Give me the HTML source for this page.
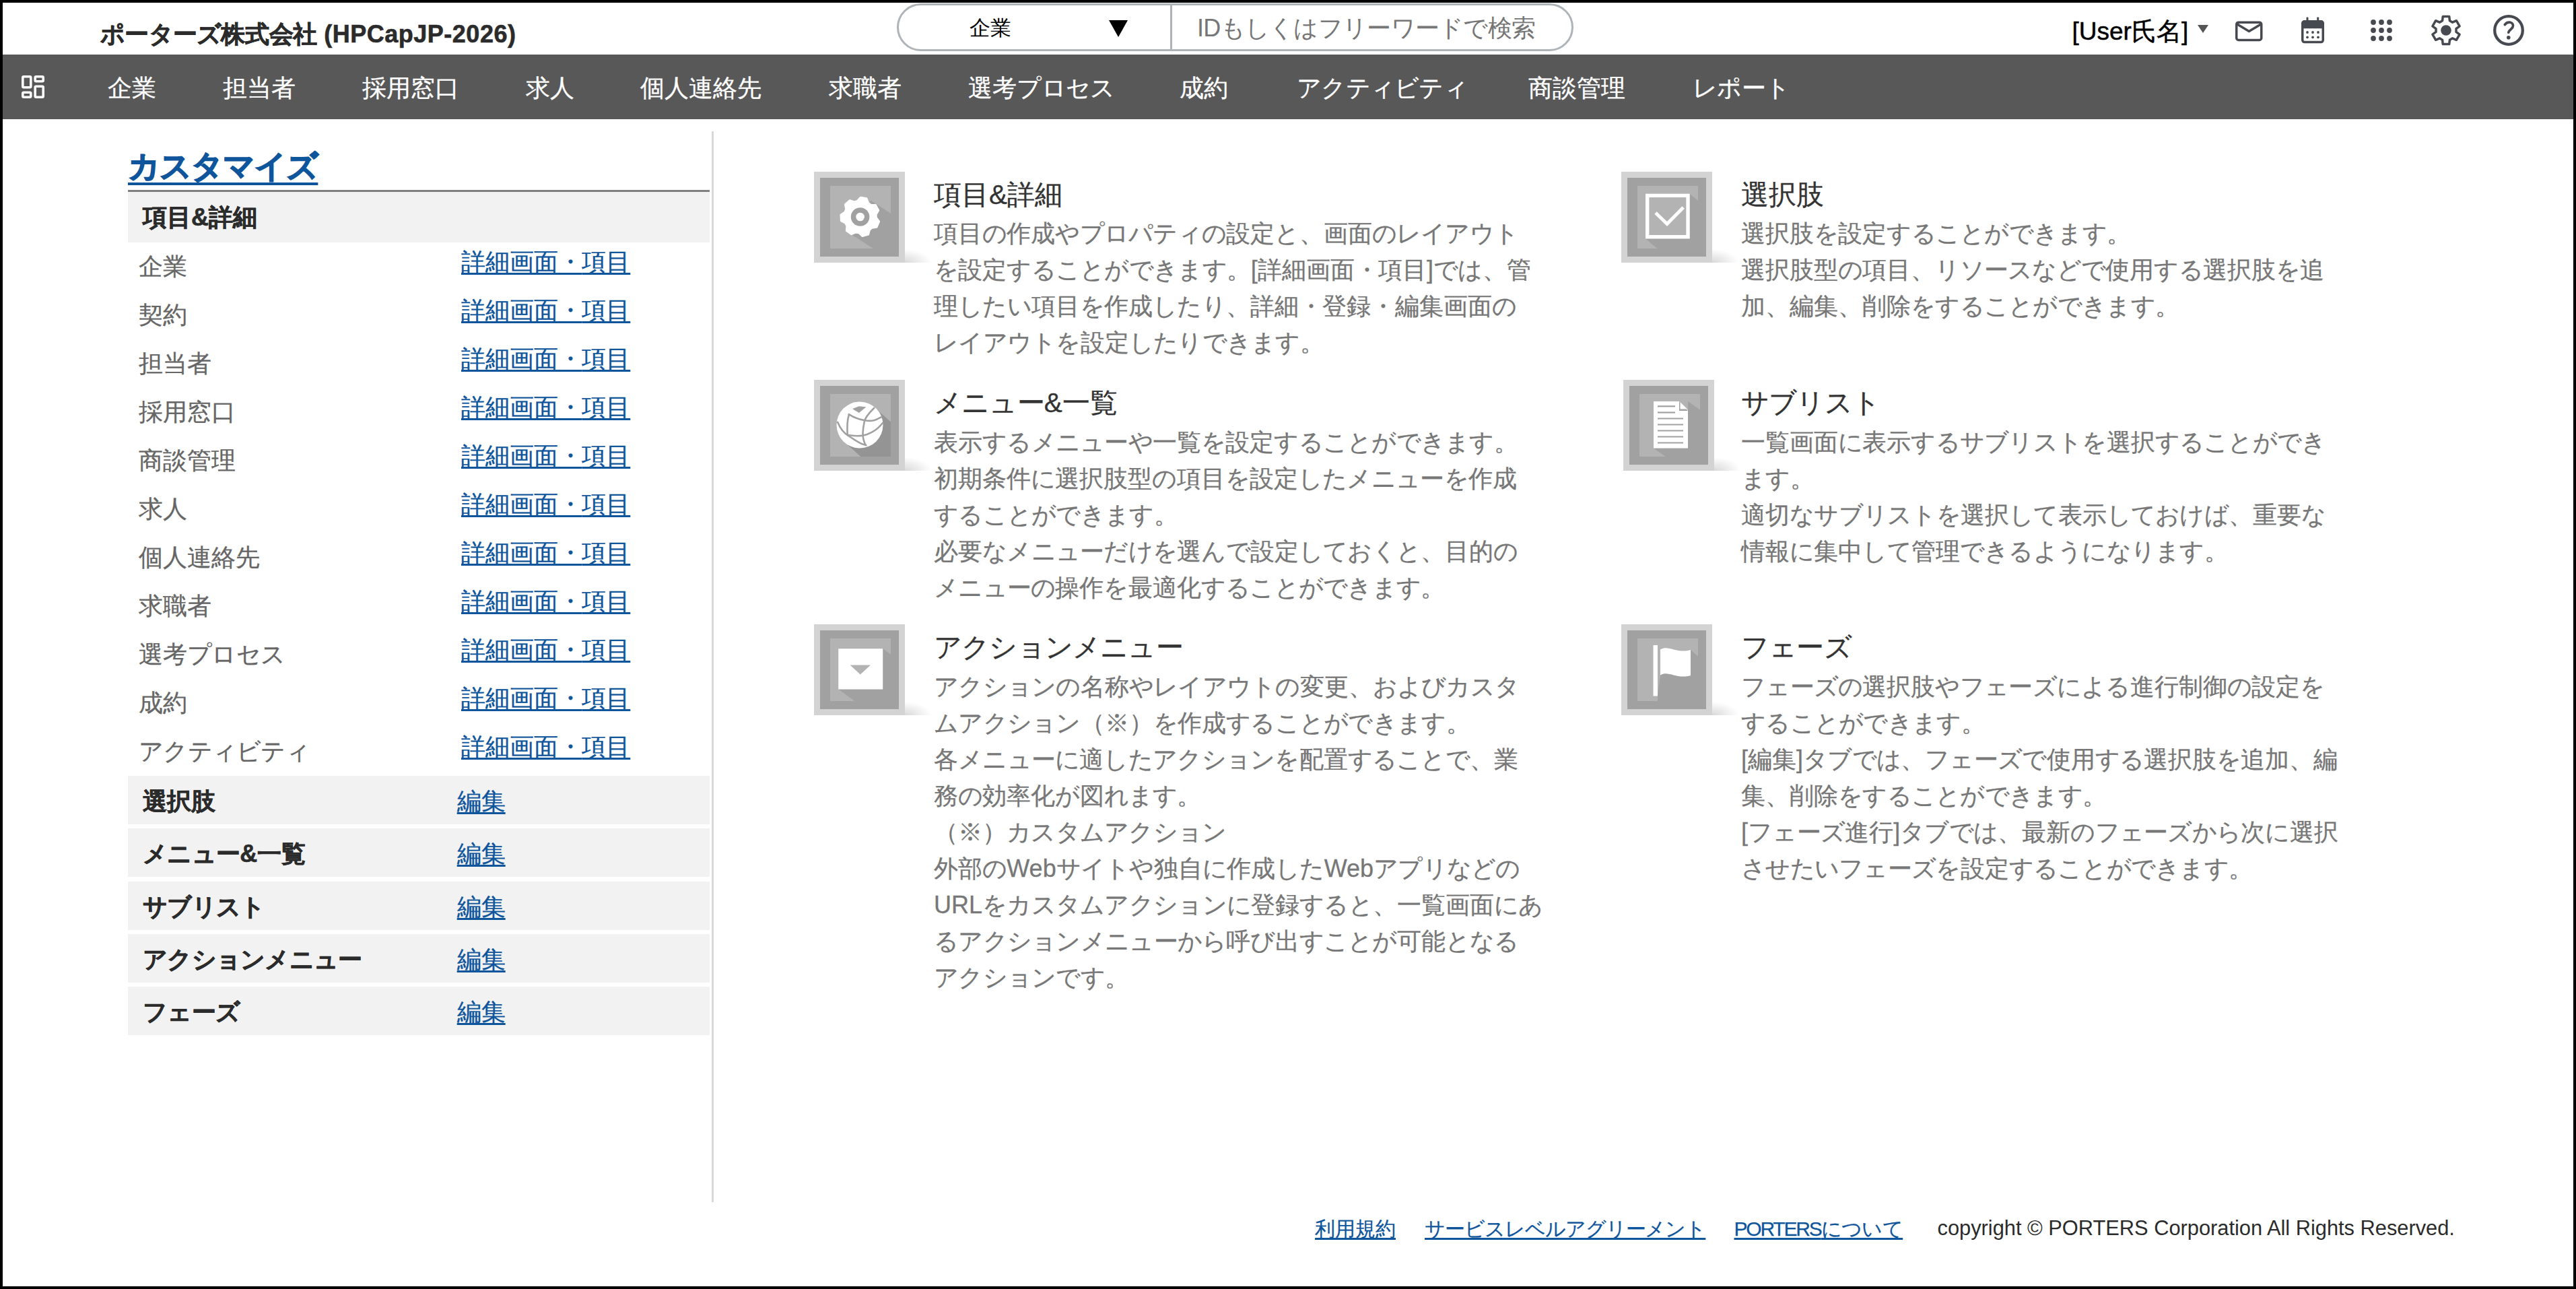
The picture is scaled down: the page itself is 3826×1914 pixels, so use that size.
<!DOCTYPE html>
<html lang="ja">
<head>
<meta charset="utf-8">
<style>
*{box-sizing:border-box;margin:0;padding:0}
html,body{width:3826px;height:1914px;overflow:hidden;background:#000}
body{font-family:"Liberation Sans",sans-serif;position:relative}
#page{position:absolute;left:4px;top:4px;width:3818px;height:1906px;background:#fff;overflow:hidden}
.a{position:absolute;white-space:nowrap}
#title{left:145px;top:25px;font-size:36px;font-weight:bold;color:#2b2b2b;line-height:44px;-webkit-text-stroke:0.6px #2b2b2b}
#search{left:1328px;top:0.5px;width:1005px;height:71px;border:3px solid #aeb4b8;border-radius:36px}
#sdiv{left:1733.5px;top:1px;width:3px;height:70px;background:#aeb4b8}
#skind{left:1436px;top:16.5px;font-size:30.5px;color:#000;line-height:40px}
#stri{left:1643px;top:26px;width:0;height:0;border-left:14.5px solid transparent;border-right:14.5px solid transparent;border-top:25px solid #000}
#sph{left:1774px;top:16px;font-size:36px;color:#767676;line-height:44px;letter-spacing:-0.7px}
#user{left:3073.5px;top:20.5px;font-size:37px;color:#000;line-height:44px;-webkit-text-stroke:0.5px #000}
#utri{left:3260px;top:33px;width:0;height:0;border-left:8px solid transparent;border-right:8px solid transparent;border-top:12px solid #555}
#nav{left:0;top:77px;width:3818px;height:96px;background:#585858}
.nv{top:1.5px;font-size:36px;color:#fff;line-height:96px;-webkit-text-stroke:0.3px #fff}
#cust{left:186px;top:214.5px;font-size:47px;font-weight:bold;color:#0f559c;line-height:56px;-webkit-text-stroke:1.4px #0f559c;text-decoration:underline;text-decoration-thickness:4px;text-underline-offset:8px}
#rule{left:186px;top:278px;width:864px;height:3px;background:#808080}
.sh{left:186px;width:864px;height:72px;background:#f2f2f2}
.sht{left:208px;font-size:36px;font-weight:bold;color:#2b2b2b;line-height:44px;-webkit-text-stroke:0.6px #2b2b2b}
.it{left:202px;font-size:36px;color:#666;line-height:44px;-webkit-text-stroke:0.3px #666}
.lk{color:#0f559c;font-size:36px;line-height:44px;text-decoration:underline;text-decoration-thickness:3px;text-underline-offset:4px;-webkit-text-stroke:0.3px #0f559c}
#vdiv{left:1053px;top:191px;width:3px;height:1590px;background:#d9d9d9}
.ic{width:135px;height:135px}
.ct{font-size:40.5px;color:#333;line-height:48px;-webkit-text-stroke:0.3px #333}
.cd{font-size:36px;color:#777;line-height:54px;-webkit-text-stroke:0.3px #777}
.fl{font-size:30px;color:#0f559c;line-height:40px;text-decoration:underline;text-decoration-thickness:3px;text-underline-offset:3px;-webkit-text-stroke:0.25px #0f559c}
#copy{left:2873.5px;top:1799.5px;font-size:30.8px;color:#2b2b2b;line-height:40px}
.curl{width:40px;height:22px;background:radial-gradient(ellipse 40px 20px at 0% 100%,rgba(0,0,0,.15),rgba(0,0,0,0) 100%)}
.k{letter-spacing:-0.02em}
.sla .k{letter-spacing:-0.035em}

</style>
</head>
<body>
<div id="page">
<div class="a" id="title"><span style="letter-spacing:-0.4px"><span class="k">ポーターズ</span>株式会社</span><span style="letter-spacing:0.5px"> (HPCapJP-2026)</span></div>
<div class="a" id="search"></div><div class="a" id="sdiv"></div>
<div class="a" id="skind">企業</div><div class="a" id="stri"></div>
<div class="a" id="sph">ID<span class="k">もしくはフリーワードで</span>検索</div>
<div class="a" id="user">[User氏名]</div><div class="a" id="utri"></div>
<svg class="a" style="left:3296px;top:11px" width="470" height="64" viewBox="0 0 470 64">
<g fill="none" stroke="#464a50" stroke-width="3.5" stroke-linejoin="round" stroke-linecap="round">
<rect x="21.75" y="18.2" width="37" height="26.3" rx="3"/>
<polyline points="23.3,21.3 40.4,31.6 57.5,21.3"/>
<rect x="119.75" y="16.75" width="30.5" height="30.8" rx="3"/>
<path d="M327.55 15.81 L328.28 9.54 L337.72 9.54 L338.45 15.81 L342.57 18.19 L348.36 15.68 L353.08 23.86 L348.01 27.62 L348.01 32.38 L353.08 36.14 L348.36 44.32 L342.57 41.81 L338.45 44.19 L337.72 50.46 L328.28 50.46 L327.55 44.19 L323.43 41.81 L317.64 44.32 L312.92 36.14 L317.99 32.38 L317.99 27.62 L312.92 23.86 L317.64 15.68 L323.43 18.19 Z"/>
<circle cx="426" cy="30" r="20.8" stroke-width="4.3"/>
<path d="M420.3 21.6 C422.3 18.6 425.6 17.8 428.3 18.2 C432 18.9 433.5 22.6 431.9 25.5 C430.4 28.1 425.9 30.4 425.8 33.2" stroke-width="3.7"/>
</g>
<g fill="#464a50">
<path d="M118 27.3 V20 a5 5 0 0 1 5 -5 h24 a5 5 0 0 1 5 5 V27.3 Z"/>
<rect x="125.5" y="10.5" width="3" height="7" rx="1"/><rect x="141.2" y="10.5" width="3" height="7" rx="1"/>
<circle cx="127" cy="33" r="1.9"/><circle cx="135" cy="33" r="1.9"/><circle cx="143" cy="33" r="1.9"/>
<circle cx="127" cy="40.3" r="1.9"/><circle cx="135" cy="40.3" r="1.9"/><circle cx="143" cy="40.3" r="1.9"/>
<circle cx="225" cy="18" r="3.9"/><circle cx="237" cy="18" r="3.9"/><circle cx="249" cy="18" r="3.9"/>
<circle cx="225" cy="30" r="3.9"/><circle cx="237" cy="30" r="3.9"/><circle cx="249" cy="30" r="3.9"/>
<circle cx="225" cy="42" r="3.9"/><circle cx="237" cy="42" r="3.9"/><circle cx="249" cy="42" r="3.9"/>
<circle cx="333" cy="30" r="7.8"/>
<circle cx="425.8" cy="40.7" r="2.8"/>
</g>
</svg>
<div class="a" id="nav">
<svg class="a" style="left:27px;top:30px" width="36" height="36" viewBox="0 0 36 36"><g fill="none" stroke="#fff" stroke-width="3.6"><rect x="2.8" y="2.8" width="12" height="16" rx="1.5"/><rect x="21.2" y="2.8" width="12" height="7" rx="1.5"/><rect x="2.8" y="26.2" width="12" height="7" rx="1.5"/><rect x="21.2" y="17.2" width="12" height="16" rx="1.5"/></g></svg>
<div class="a nv" style="left:155.5px">企業</div>
<div class="a nv" style="left:326.8px">担当者</div>
<div class="a nv" style="left:533.7px">採用窓口</div>
<div class="a nv" style="left:776.8px">求人</div>
<div class="a nv" style="left:947.0px">個人連絡先</div>
<div class="a nv" style="left:1227.0px">求職者</div>
<div class="a nv" style="left:1434.4px">選考<span class="k">プロセス</span></div>
<div class="a nv" style="left:1748.0px">成約</div>
<div class="a nv" style="left:1922.0px"><span class="k">アクティビティ</span></div>
<div class="a nv" style="left:2265.6px">商談管理</div>
<div class="a nv" style="left:2510.0px"><span class="k">レポート</span></div>
</div>
<div class="a" id="cust"><span class="k">カスタマイズ</span></div>
<div class="a" id="rule"></div>
<div class="a sh" style="top:281px;height:75px"></div>
<div class="a sht" style="top:297px">項目&amp;詳細</div>
<div class="a it" style="top:369.5px">企業</div>
<div class="a lk" style="left:681px;top:363px">詳細画面<span class="k">・</span>項目</div>
<div class="a it" style="top:441.5px">契約</div>
<div class="a lk" style="left:681px;top:435px">詳細画面<span class="k">・</span>項目</div>
<div class="a it" style="top:513.5px">担当者</div>
<div class="a lk" style="left:681px;top:507px">詳細画面<span class="k">・</span>項目</div>
<div class="a it" style="top:585.5px">採用窓口</div>
<div class="a lk" style="left:681px;top:579px">詳細画面<span class="k">・</span>項目</div>
<div class="a it" style="top:657.5px">商談管理</div>
<div class="a lk" style="left:681px;top:651px">詳細画面<span class="k">・</span>項目</div>
<div class="a it" style="top:729.5px">求人</div>
<div class="a lk" style="left:681px;top:723px">詳細画面<span class="k">・</span>項目</div>
<div class="a it" style="top:801.5px">個人連絡先</div>
<div class="a lk" style="left:681px;top:795px">詳細画面<span class="k">・</span>項目</div>
<div class="a it" style="top:873.5px">求職者</div>
<div class="a lk" style="left:681px;top:867px">詳細画面<span class="k">・</span>項目</div>
<div class="a it" style="top:945.5px">選考<span class="k">プロセス</span></div>
<div class="a lk" style="left:681px;top:939px">詳細画面<span class="k">・</span>項目</div>
<div class="a it" style="top:1017.5px">成約</div>
<div class="a lk" style="left:681px;top:1011px">詳細画面<span class="k">・</span>項目</div>
<div class="a it" style="top:1089.5px"><span class="k">アクティビティ</span></div>
<div class="a lk" style="left:681px;top:1083px">詳細画面<span class="k">・</span>項目</div>
<div class="a sh" style="top:1148.0px"></div>
<div class="a sht" style="top:1164.0px">選択肢</div>
<div class="a lk" style="left:674.7px;top:1164.0px">編集</div>
<div class="a sh" style="top:1226.3px"></div>
<div class="a sht" style="top:1242.3px"><span class="k">メニュー</span>&amp;一覧</div>
<div class="a lk" style="left:674.7px;top:1242.3px">編集</div>
<div class="a sh" style="top:1304.6px"></div>
<div class="a sht" style="top:1320.6px"><span class="k">サブリスト</span></div>
<div class="a lk" style="left:674.7px;top:1320.6px">編集</div>
<div class="a sh" style="top:1382.9px"></div>
<div class="a sht" style="top:1398.9px"><span class="k">アクションメニュー</span></div>
<div class="a lk" style="left:674.7px;top:1398.9px">編集</div>
<div class="a sh" style="top:1461.2px"></div>
<div class="a sht" style="top:1477.2px"><span class="k">フェーズ</span></div>
<div class="a lk" style="left:674.7px;top:1477.2px">編集</div>
<div class="a" id="vdiv"></div>
<div class="a ic" style="left:1205px;top:251px"><svg width="135" height="135" viewBox="0 0 135 135"><defs><clipPath id="k1"><rect x="24" y="21" width="90" height="93"/></clipPath></defs><rect width="135" height="135" fill="#d3d3d3"/><rect x="9" y="9" width="117" height="117" fill="#a1a1a1"/><rect x="24" y="21" width="90" height="93" fill="#b3b3b3"/><g clip-path="url(#k1)" fill="#a1a1a1"><polygon points="52.8,91.3 84.4,42.7 252.1,151.6 220.5,200.2"/></g><path d="M64.47 43.56 L69.10 38.20 L77.98 39.77 L80.50 46.39 L84.35 49.16 L91.43 49.44 L95.74 57.35 L92.13 63.45 L92.37 68.19 L96.56 73.90 L93.06 82.20 L86.05 83.19 L82.49 86.32 L80.64 93.16 L71.97 95.60 L66.82 90.73 L62.15 89.91 L55.65 92.73 L48.34 87.47 L48.94 80.41 L46.67 76.24 L40.41 72.92 L39.97 63.92 L45.86 59.98 L47.70 55.62 L46.40 48.65 L53.16 42.69 L59.90 44.85 Z" fill="#fff" stroke="#fff" stroke-width="3" stroke-linejoin="round"/><circle cx="68.6" cy="67" r="13.8" fill="#a1a1a1"/><circle cx="68.6" cy="67" r="6.3" fill="#fff"/></svg></div>
<div class="a ct" style="left:1383px;top:261px">項目&amp;詳細</div>
<div class="a cd" style="left:1383px;top:316px">項目<span class="k">の</span>作成<span class="k">やプロパティの</span>設定<span class="k">と</span>、画面<span class="k">のレイアウト</span><br><span class="k">を</span>設定<span class="k">することができます</span>。[詳細画面<span class="k">・</span>項目]<span class="k">では</span>、管<br>理<span class="k">したい</span>項目<span class="k">を</span>作成<span class="k">したり</span>、詳細<span class="k">・</span>登録<span class="k">・</span>編集画面<span class="k">の</span><br><span class="k">レイアウトを</span>設定<span class="k">したりできます</span>。</div>
<div class="a curl" style="left:1340px;top:364px"></div>
<div class="a ic" style="left:2404px;top:251px"><svg width="135" height="135" viewBox="0 0 135 135"><defs><clipPath id="k2"><rect x="24" y="21" width="90" height="93"/></clipPath></defs><rect width="135" height="135" fill="#d3d3d3"/><rect x="9" y="9" width="117" height="117" fill="#a1a1a1"/><rect x="24" y="21" width="90" height="93" fill="#b3b3b3"/><g clip-path="url(#k2)" fill="#a1a1a1"><polygon points="101.7,32.7 254.9,161.3 254.9,228.0 189.2,228.0 36,99.4 101.7,99.4"/></g><rect x="38.7" y="35.4" width="60.3" height="61.3" fill="none" stroke="#fff" stroke-width="5.4"/><polyline points="51,61 68,77.5 92.2,53" fill="none" stroke="#fff" stroke-width="5"/></svg></div>
<div class="a ct" style="left:2582px;top:261px">選択肢</div>
<div class="a cd" style="left:2582px;top:316px">選択肢<span class="k">を</span>設定<span class="k">することができます</span>。<br>選択肢型<span class="k">の</span>項目、<span class="k">リソースなどで</span>使用<span class="k">する</span>選択肢<span class="k">を</span>追<br>加、編集、削除<span class="k">をすることができます</span>。</div>
<div class="a curl" style="left:2539px;top:364px"></div>
<div class="a ic" style="left:1205px;top:560px"><svg width="135" height="135" viewBox="0 0 135 135"><defs><clipPath id="k3"><rect x="24" y="21" width="90" height="93"/></clipPath></defs><rect width="135" height="135" fill="#d3d3d3"/><rect x="9" y="9" width="117" height="117" fill="#a1a1a1"/><rect x="24" y="21" width="90" height="93" fill="#b3b3b3"/><g clip-path="url(#k3)" fill="#949494"><polygon points="45.2,92.3 90.8,41.7 239.4,175.6 193.9,226.1"/></g><circle cx="68" cy="67" r="34.5" fill="#fff"/>
<path d="M57 43.1 L66.9 39.2 L77.4 40.2 L66.9 49.1 Z" fill="#a1a1a1"/>
<g fill="none" stroke="#a1a1a1" stroke-width="2.6" stroke-linecap="round">
<path d="M51.7 51.1 C56 54 62 58 75.5 60.3 S95 58 100.5 55"/>
<path d="M89.3 41.8 C82 49 76 56 74.8 62 S71 80 73.5 88.6 S76 95 77.4 97.2"/>
<path d="M51.7 52.4 C50 58 49 70 49.7 82"/>
<path d="M35.2 62.9 C38 70 44 79 52.4 84 S68 95 75.5 96.6"/>
<path d="M49.7 82 C56 83 66 83.5 72.2 82.7 S92 77 101.8 64.2"/>
</g></svg></div>
<div class="a ct" style="left:1383px;top:570px"><span class="k">メニュー</span>&amp;一覧</div>
<div class="a cd" style="left:1383px;top:626px">表示<span class="k">するメニューや</span>一覧<span class="k">を</span>設定<span class="k">することができます</span>。<br>初期条件<span class="k">に</span>選択肢型<span class="k">の</span>項目<span class="k">を</span>設定<span class="k">したメニューを</span>作成<br><span class="k">することができます</span>。<br>必要<span class="k">なメニューだけを</span>選<span class="k">んで</span>設定<span class="k">しておくと</span>、目的<span class="k">の</span><br><span class="k">メニューの</span>操作<span class="k">を</span>最適化<span class="k">することができます</span>。</div>
<div class="a curl" style="left:1340px;top:673px"></div>
<div class="a ic" style="left:2406.5px;top:560px"><svg width="135" height="135" viewBox="0 0 135 135"><defs><clipPath id="k4"><rect x="24" y="21" width="90" height="93"/></clipPath></defs><rect width="135" height="135" fill="#d3d3d3"/><rect x="9" y="9" width="117" height="117" fill="#a1a1a1"/><rect x="24" y="21" width="90" height="93" fill="#b3b3b3"/><g clip-path="url(#k4)" fill="#a1a1a1"><polygon points="96,32 259.8,146.7 259.8,216.2 208.8,216.2 45,101.5 96,101.5"/></g><path d="M45 32 H83 L96 45 V101.5 H45 Z" fill="#fff"/>
<path d="M83 32 V46 H96 Z" fill="#a1a1a1"/>
<path d="M84.5 33 L95 43.5 H84.5 Z" fill="#fff"/>
<g stroke="#a1a1a1" stroke-width="2.2">
<line x1="51" y1="39.3" x2="77" y2="39.3"/><line x1="51" y1="48.5" x2="77" y2="48.5"/>
<line x1="51" y1="57.5" x2="89" y2="57.5"/><line x1="51" y1="66.5" x2="89" y2="66.5"/>
<line x1="51" y1="75.5" x2="89" y2="75.5"/><line x1="51" y1="84.5" x2="89" y2="84.5"/>
<line x1="51" y1="93.5" x2="89" y2="93.5"/></g></svg></div>
<div class="a ct" style="left:2582px;top:570px"><span class="k">サブリスト</span></div>
<div class="a cd" style="left:2582px;top:626px">一覧画面<span class="k">に</span>表示<span class="k">するサブリストを</span>選択<span class="k">することができ</span><br><span class="k">ます</span>。<br>適切<span class="k">なサブリストを</span>選択<span class="k">して</span>表示<span class="k">しておけば</span>、重要<span class="k">な</span><br>情報<span class="k">に</span>集中<span class="k">して</span>管理<span class="k">できるようになります</span>。</div>
<div class="a curl" style="left:2541.5px;top:673px"></div>
<div class="a ic" style="left:1205px;top:923px"><svg width="135" height="135" viewBox="0 0 135 135"><defs><clipPath id="k5"><rect x="24" y="21" width="90" height="93"/></clipPath></defs><rect width="135" height="135" fill="#d3d3d3"/><rect x="9" y="9" width="117" height="117" fill="#a1a1a1"/><rect x="24" y="21" width="90" height="93" fill="#b3b3b3"/><g clip-path="url(#k5)" fill="#a1a1a1"><polygon points="102.2,36.2 264.0,153.8 264.0,214.1 198.0,214.1 36.2,96.5 102.2,96.5"/></g><rect x="36.2" y="36.2" width="66" height="60.3" fill="#fff"/><polygon points="53.6,60.5 84,60.5 68.8,74.5" fill="#b3b3b3"/></svg></div>
<div class="a ct" style="left:1383px;top:933px"><span class="k">アクションメニュー</span></div>
<div class="a cd" style="left:1383px;top:989px"><span class="k">アクションの</span>名称<span class="k">やレイアウトの</span>変更、<span class="k">およびカスタ</span><br><span class="k">ムアクション</span>（※）<span class="k">を</span>作成<span class="k">することができます</span>。<br>各<span class="k">メニューに</span>適<span class="k">したアクションを</span>配置<span class="k">することで</span>、業<br>務<span class="k">の</span>効率化<span class="k">が</span>図<span class="k">れます</span>。<br>（※）<span class="k">カスタムアクション</span><br>外部<span class="k">の</span>Web<span class="k">サイトや</span>独自<span class="k">に</span>作成<span class="k">した</span>Web<span class="k">アプリなどの</span><br>URL<span class="k">をカスタムアクションに</span>登録<span class="k">すると</span>、一覧画面<span class="k">にあ</span><br><span class="k">るアクションメニューから</span>呼<span class="k">び</span>出<span class="k">すことが</span>可能<span class="k">となる</span><br><span class="k">アクションです</span>。</div>
<div class="a curl" style="left:1340px;top:1036px"></div>
<div class="a ic" style="left:2404px;top:923px"><svg width="135" height="135" viewBox="0 0 135 135"><defs><clipPath id="k6"><rect x="24" y="21" width="90" height="93"/></clipPath></defs><rect width="135" height="135" fill="#d3d3d3"/><rect x="9" y="9" width="117" height="117" fill="#a1a1a1"/><rect x="24" y="21" width="90" height="93" fill="#b3b3b3"/><g clip-path="url(#k6)" fill="#a1a1a1"><polygon points="103,38 280,190 280,400 54,400 54,106 58,75.5"/></g><rect x="47.5" y="31" width="6.5" height="75.5" fill="#fff"/>
<path d="M58 37.5 C70 30 82 44 103 38 V76 C82 82 70 68 58 75.5 Z" fill="#fff"/></svg></div>
<div class="a ct" style="left:2582px;top:933px"><span class="k">フェーズ</span></div>
<div class="a cd" style="left:2582px;top:989px"><span class="k">フェーズの</span>選択肢<span class="k">やフェーズによる</span>進行制御<span class="k">の</span>設定<span class="k">を</span><br><span class="k">することができます</span>。<br>[編集]<span class="k">タブでは</span>、<span class="k">フェーズで</span>使用<span class="k">する</span>選択肢<span class="k">を</span>追加、編<br>集、削除<span class="k">をすることができます</span>。<br>[<span class="k">フェーズ</span>進行]<span class="k">タブでは</span>、最新<span class="k">のフェーズから</span>次<span class="k">に</span>選択<br><span class="k">させたいフェーズを</span>設定<span class="k">することができます</span>。</div>
<div class="a curl" style="left:2539px;top:1036px"></div>
<div class="a fl" style="left:1949px;top:1801px">利用規約</div>
<div class="a fl sla" style="left:2112px;top:1801px"><span class="k">サービスレベルアグリーメント</span></div>
<div class="a fl" style="left:2571.5px;top:1801px"><span style="letter-spacing:-2.2px">PORTERS</span><span class="k">について</span></div>
<div class="a" id="copy">copyright © PORTERS Corporation All Rights Reserved.</div>
</div>
</body>
</html>
